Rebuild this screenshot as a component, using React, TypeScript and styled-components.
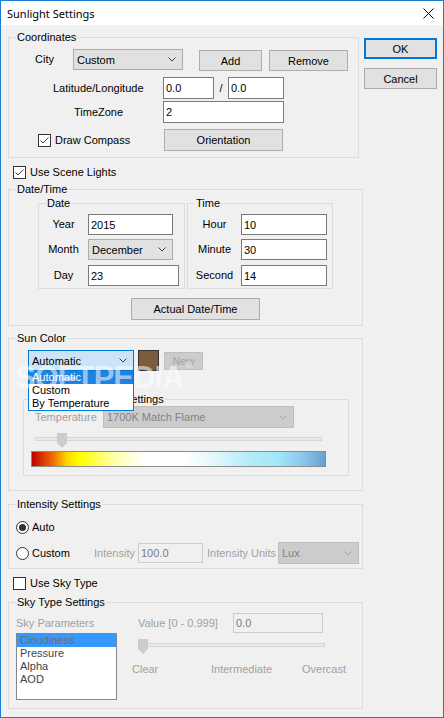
import styled, { createGlobalStyle } from "styled-components";

const GlobalStyle = createGlobalStyle`
  body {
    margin: 0;
    background: #ffffff;
    font-family: "Liberation Sans", Arial, sans-serif;
    font-size: 11px;
  }
`;

const Window = styled.div`
  position: relative;
  width: 444px;
  height: 718px;
  box-sizing: border-box;
  border: 1px solid #1a7dd4;
  display: flex;
  flex-direction: column;
  background: #f0f0f0;
  overflow: hidden;
  color: #000;
`;

const TitleBar = styled.div`
  flex: none;
  height: 24px;
  background: #ffffff;
  display: flex;
  align-items: center;
  justify-content: space-between;
  padding: 0 9px 0 6px;
`;

const Title = styled.span`
  font-family: "Noto Sans", "Liberation Sans", sans-serif;
  font-size: 11px;
  line-height: 16px;
  padding-top: 1px;
`;

const Body = styled.div`
  flex: 1;
  display: flex;
  padding-left: 7px;
`;

const LeftColumn = styled.div`
  width: 355px;
  flex: none;
  display: flex;
  flex-direction: column;
`;

const RightColumn = styled.div`
  margin-left: 1px;
  padding-top: 13px;
  display: flex;
  flex-direction: column;
  gap: 9px;
`;

const Group = styled.div<{ $w: number; $h: number; $mt?: number; $ml?: number }>`
  position: relative;
  box-sizing: border-box;
  flex: none;
  width: ${(p) => p.$w}px;
  height: ${(p) => p.$h}px;
  margin-top: ${(p) => p.$mt ?? 0}px;
  margin-left: ${(p) => p.$ml ?? 0}px;
  border: 1px solid #dcdcdc;
  display: flex;
  flex-direction: column;
`;

const Legend = styled.span<{ $left?: number }>`
  position: absolute;
  top: -8px;
  left: ${(p) => p.$left ?? 7}px;
  padding: 0 1px;
  background: #f0f0f0;
  line-height: 14px;
  white-space: nowrap;
`;

const Row = styled.div<{ $h: number; $mt?: number; $ml?: number; $top?: boolean }>`
  flex: none;
  display: flex;
  align-items: ${(p) => (p.$top ? "flex-start" : "center")};
  height: ${(p) => p.$h}px;
  margin-top: ${(p) => p.$mt ?? 0}px;
  margin-left: ${(p) => p.$ml ?? 0}px;
`;

const Label = styled.span<{ $w?: number; $ml?: number; $mt?: number; $dim?: boolean; $center?: boolean }>`
  flex: none;
  width: ${(p) => (p.$w ? `${p.$w}px` : "auto")};
  margin-left: ${(p) => p.$ml ?? 0}px;
  margin-top: ${(p) => p.$mt ?? 0}px;
  color: ${(p) => (p.$dim ? "#a0a0a0" : "#000")};
  text-align: ${(p) => (p.$center ? "center" : "left")};
  line-height: 13px;
  white-space: nowrap;
`;

const Btn = styled.button<{
  $w: number;
  $h: number;
  $ml?: number;
  $mt?: number;
  $primary?: boolean;
  $off?: boolean;
}>`
  flex: none;
  box-sizing: border-box;
  width: ${(p) => p.$w}px;
  height: ${(p) => p.$h}px;
  margin: ${(p) => p.$mt ?? 0}px 0 0 ${(p) => p.$ml ?? 0}px;
  padding: 0;
  font: 11px "Liberation Sans", Arial, sans-serif;
  color: ${(p) => (p.$off ? "#a3a3a3" : "#000")};
  background: ${(p) => (p.$off ? "#cccccc" : "#e1e1e1")};
  border: ${(p) =>
    p.$primary ? "2px solid #0078d7" : `1px solid ${p.$off ? "#bfbfbf" : "#adadad"}`};
  align-self: ${(p) => (p.$mt ? "flex-start" : "auto")};
`;

const Field = styled.input<{ $w: number; $h: number; $ml?: number; $off?: boolean }>`
  flex: none;
  box-sizing: border-box;
  width: ${(p) => p.$w}px;
  height: ${(p) => p.$h}px;
  margin: 0 0 0 ${(p) => p.$ml ?? 0}px;
  padding: 0 2px;
  font: 11px "Liberation Sans", Arial, sans-serif;
  color: ${(p) => (p.$off ? "#7a7a7a" : "#000")};
  background: ${(p) => (p.$off ? "#f0f0f0" : "#ffffff")};
  border: 1px solid ${(p) => (p.$off ? "#cccccc" : "#7a7a7a")};
  outline: none;
`;

type ComboState = "normal" | "focus" | "off";

const comboColors: Record<ComboState, { bg: string; border: string; text: string; arrow: string }> = {
  normal: { bg: "#e1e1e1", border: "#adadad", text: "#000", arrow: "#444" },
  focus: { bg: "#cce4f7", border: "#0078d7", text: "#000", arrow: "#444" },
  off: { bg: "#cccccc", border: "#bfbfbf", text: "#838383", arrow: "#a8a8a8" },
};

const ComboBox = styled.div<{ $w: number; $h: number; $ml?: number; $state: ComboState }>`
  position: relative;
  flex: none;
  box-sizing: border-box;
  display: flex;
  align-items: center;
  justify-content: space-between;
  width: ${(p) => p.$w}px;
  height: ${(p) => p.$h}px;
  margin-left: ${(p) => p.$ml ?? 0}px;
  padding: 0 6px 0 3px;
  background: ${(p) => comboColors[p.$state].bg};
  border: 1px solid ${(p) => comboColors[p.$state].border};
  color: ${(p) => comboColors[p.$state].text};
`;

const DropList = styled.div`
  position: absolute;
  z-index: 2;
  top: 19px;
  left: -1px;
  width: 106px;
  box-sizing: border-box;
  border: 1px solid #0078d7;
  background: #ffffff;
`;

const DropItem = styled.div<{ $active?: boolean }>`
  height: 13px;
  line-height: 13px;
  padding-left: 3px;
  background: ${(p) => (p.$active ? "#1e82e0" : "transparent")};
  color: ${(p) => (p.$active ? "#ffffff" : "#000")};
`;

const CheckBox = styled.span<{ $ml?: number; $round?: boolean }>`
  flex: none;
  box-sizing: border-box;
  width: 13px;
  height: 13px;
  margin-left: ${(p) => p.$ml ?? 0}px;
  border: 1px solid #333333;
  border-radius: ${(p) => (p.$round ? "50%" : "0")};
  background: #ffffff;
  display: flex;
  align-items: center;
  justify-content: center;
`;

const Dot = styled.span`
  width: 7px;
  height: 7px;
  border-radius: 50%;
  background: #333333;
`;

const Swatch = styled.div<{ $ml?: number }>`
  flex: none;
  box-sizing: border-box;
  width: 21px;
  height: 21px;
  margin-left: ${(p) => p.$ml ?? 0}px;
  background: #7b5d3b;
  border: 1px solid #333333;
`;

const Slider = styled.div<{ $w: number; $ml?: number; $mt?: number }>`
  position: relative;
  flex: none;
  width: ${(p) => p.$w}px;
  height: 15px;
  margin-left: ${(p) => p.$ml ?? 0}px;
  margin-top: ${(p) => p.$mt ?? 0}px;

  &::before {
    content: "";
    position: absolute;
    left: 0;
    right: 0;
    top: 4px;
    height: 4px;
    box-sizing: border-box;
    background: #e7eaea;
    border: 1px solid #d6d6d6;
  }
`;

const Thumb = styled.svg<{ $x: number }>`
  position: absolute;
  top: 0;
  left: ${(p) => p.$x}px;
`;

const GradientBar = styled.div`
  flex: none;
  box-sizing: border-box;
  width: 295px;
  height: 16px;
  margin: 3px 0 0 7px;
  border: 1px solid #8c8c8c;
  background: linear-gradient(
    to right,
    #c00000 0%,
    #ee6a00 7%,
    #ffd800 12%,
    #ffff00 16%,
    #ffffa8 28%,
    #ffffff 38%,
    #ffffff 52%,
    #e4f7fc 62%,
    #b4ecfa 74%,
    #a2e6f8 84%,
    #8cc8ec 92%,
    #6a9fd2 100%
  );
`;

const ListBox = styled.div`
  flex: none;
  box-sizing: border-box;
  width: 101px;
  height: 67px;
  margin-left: 7px;
  border: 1px solid #828790;
  background: #ffffff;
`;

const ListItem = styled.div<{ $active?: boolean }>`
  height: 13px;
  line-height: 13px;
  padding-left: 3px;
  background: ${(p) => (p.$active ? "#3399ff" : "transparent")};
  color: ${(p) => (p.$active ? "#7a6a5c" : "#444444")};
`;

const SkyControls = styled.div`
  display: flex;
  flex-direction: column;
  margin-left: 15px;
`;

const Watermark = styled.div`
  position: absolute;
  z-index: 5;
  left: 14px;
  top: 359px;
  font-family: "Liberation Sans", Arial, sans-serif;
  font-weight: bold;
  font-size: 31px;
  letter-spacing: -1px;
  color: rgba(255, 255, 255, 0.55);
  pointer-events: none;

  sup {
    font-size: 9px;
    vertical-align: top;
    margin-left: 2px;
  }
`;

const Chevron = ({ color }: { color: string }) => (
  <svg width="8" height="5" viewBox="0 0 8 5">
    <path d="M0.5 0.5 L4 4 L7.5 0.5" fill="none" stroke={color} strokeWidth="1" />
  </svg>
);

const Combo = ({
  w,
  h,
  ml,
  state = "normal",
  value,
  children,
}: {
  w: number;
  h: number;
  ml?: number;
  state?: ComboState;
  value: string;
  children?: React.ReactNode;
}) => (
  <ComboBox $w={w} $h={h} $ml={ml} $state={state}>
    <span>{value}</span>
    <Chevron color={comboColors[state].arrow} />
    {children}
  </ComboBox>
);

const Check = ({ ml, checked }: { ml?: number; checked?: boolean }) => (
  <CheckBox $ml={ml}>
    {checked && (
      <svg width="11" height="11" viewBox="0 0 11 11">
        <path d="M1.5 5.5 L4 8 L9.5 2.5" fill="none" stroke="#444" strokeWidth="1" />
      </svg>
    )}
  </CheckBox>
);

const Radio = ({ ml, checked }: { ml?: number; checked?: boolean }) => (
  <CheckBox $ml={ml} $round>
    {checked && <Dot />}
  </CheckBox>
);

const SliderThumb = ({ x }: { x: number }) => (
  <Thumb $x={x} width="10" height="15" viewBox="0 0 10 15">
    <path d="M0 0 H10 V10 L5 15 L0 10 Z" fill="#cccccc" />
  </Thumb>
);

const CloseIcon = () => (
  <svg width="11" height="11" viewBox="0 0 11 11">
    <path d="M0.5 0.5 L10.5 10.5 M10.5 0.5 L0.5 10.5" stroke="#000" strokeWidth="1" />
  </svg>
);

export default function App() {
  return (
    <>
      <GlobalStyle />
      <Window>
        <TitleBar>
          <Title>Sunlight Settings</Title>
          <CloseIcon />
        </TitleBar>
        <Body>
          <LeftColumn>
            <Group $w={351} $h={121} $mt={12}>
              <Legend>Coordinates</Legend>
              <Row $h={22} $mt={11} $top>
                <Label $w={38} $ml={26} $mt={4}>
                  City
                </Label>
                <Combo w={110} h={21} value="Custom" />
                <Btn $w={63} $h={21} $ml={16} $mt={1}>
                  Add
                </Btn>
                <Btn $w={79} $h={21} $ml={7} $mt={1}>
                  Remove
                </Btn>
              </Row>
              <Row $h={22} $mt={6}>
                <Label $w={110} $ml={44}>
                  Latitude/Longitude
                </Label>
                <Field $w={51} $h={22} readOnly defaultValue="0.0" />
                <Label $w={14} $center>
                  /
                </Label>
                <Field $w={56} $h={22} readOnly defaultValue="0.0" />
              </Row>
              <Row $h={22} $mt={2}>
                <Label $w={89} $ml={65}>
                  TimeZone
                </Label>
                <Field $w={121} $h={22} readOnly defaultValue="2" />
              </Row>
              <Row $h={22} $mt={6}>
                <Check ml={29} checked />
                <Label $w={109} $ml={4}>
                  Draw Compass
                </Label>
                <Btn $w={119} $h={22}>
                  Orientation
                </Btn>
              </Row>
            </Group>

            <Row $h={13} $mt={8}>
              <Check ml={5} checked />
              <Label $ml={4}>Use Scene Lights</Label>
            </Row>

            <Group $w={355} $h={137} $mt={10}>
              <Legend>Date/Time</Legend>
              <Row $h={86} $mt={13} $ml={29} $top>
                <Group $w={147} $h={86}>
                  <Legend>Date</Legend>
                  <Row $h={21} $mt={10}>
                    <Label $w={49} $center>
                      Year
                    </Label>
                    <Field $w={85} $h={21} readOnly defaultValue="2015" />
                  </Row>
                  <Row $h={21} $mt={4}>
                    <Label $w={49} $center>
                      Month
                    </Label>
                    <Combo w={85} h={21} value="December" />
                  </Row>
                  <Row $h={21} $mt={5}>
                    <Label $w={49} $center>
                      Day
                    </Label>
                    <Field $w={91} $h={21} readOnly defaultValue="23" />
                  </Row>
                </Group>
                <Group $w={146} $h={86} $ml={2}>
                  <Legend>Time</Legend>
                  <Row $h={21} $mt={10}>
                    <Label $w={53} $center>
                      Hour
                    </Label>
                    <Field $w={86} $h={21} readOnly defaultValue="10" />
                  </Row>
                  <Row $h={21} $mt={4}>
                    <Label $w={53} $center>
                      Minute
                    </Label>
                    <Field $w={86} $h={21} readOnly defaultValue="30" />
                  </Row>
                  <Row $h={21} $mt={5}>
                    <Label $w={53} $center>
                      Second
                    </Label>
                    <Field $w={86} $h={21} readOnly defaultValue="14" />
                  </Row>
                </Group>
              </Row>
              <Row $h={22} $mt={9}>
                <Btn $w={129} $h={22} $ml={122}>
                  Actual Date/Time
                </Btn>
              </Row>
            </Group>

            <Group $w={355} $h={153} $mt={12}>
              <Legend>Sun Color</Legend>
              <Row $h={21} $mt={11} $ml={19}>
                <Combo w={106} h={21} state="focus" value="Automatic">
                  <DropList>
                    <DropItem $active>Automatic</DropItem>
                    <DropItem>Custom</DropItem>
                    <DropItem>By Temperature</DropItem>
                  </DropList>
                </Combo>
                <Swatch $ml={4} />
                <Btn $w={39} $h={18} $ml={5} $off>
                  New
                </Btn>
              </Row>
              <Group $w={326} $h={77} $mt={28} $ml={14}>
                <Legend $left={5}>Color Temperature Settings</Legend>
                <Row $h={22} $mt={6}>
                  <Label $w={68} $ml={11} $dim>
                    Temperature
                  </Label>
                  <Combo w={191} h={22} state="off" value="1700K Match Flame" />
                </Row>
                <Slider $w={287} $ml={11} $mt={5}>
                  <SliderThumb x={22} />
                </Slider>
                <GradientBar />
              </Group>
            </Group>

            <Group $w={355} $h={65} $mt={13}>
              <Legend>Intensity Settings</Legend>
              <Row $h={13} $mt={16}>
                <Radio ml={7} checked />
                <Label $ml={3}>Auto</Label>
              </Row>
              <Row $h={22} $mt={8}>
                <Radio ml={7} />
                <Label $w={62} $ml={3}>
                  Custom
                </Label>
                <Label $w={44} $dim>
                  Intensity
                </Label>
                <Field $w={65} $h={20} $off readOnly defaultValue="100.0" />
                <Label $w={71} $ml={4} $dim>
                  Intensity Units
                </Label>
                <Combo w={81} h={22} state="off" value="Lux" />
              </Row>
            </Group>

            <Row $h={13} $mt={8}>
              <Check ml={5} />
              <Label $ml={4}>Use Sky Type</Label>
            </Row>

            <Group $w={355} $h={107} $mt={12}>
              <Legend>Sky Type Settings</Legend>
              <Row $h={20} $mt={10}>
                <Label $w={122} $ml={7} $dim>
                  Sky Parameters
                </Label>
                <Label $w={95} $dim>
                  Value [0 - 0.999]
                </Label>
                <Field $w={90} $h={20} $off readOnly defaultValue="0.0" />
              </Row>
              <Row $h={67} $top>
                <ListBox>
                  <ListItem $active>Cloudiness</ListItem>
                  <ListItem>Pressure</ListItem>
                  <ListItem>Alpha</ListItem>
                  <ListItem>AOD</ListItem>
                </ListBox>
                <SkyControls>
                  <Slider $w={187} $ml={6} $mt={6}>
                    <SliderThumb x={0} />
                  </Slider>
                  <Row $h={13} $mt={9}>
                    <Label $w={79} $dim>
                      Clear
                    </Label>
                    <Label $w={91} $dim>
                      Intermediate
                    </Label>
                    <Label $dim>Overcast</Label>
                  </Row>
                </SkyControls>
              </Row>
            </Group>
          </LeftColumn>

          <RightColumn>
            <Btn $w={73} $h={21} $primary>
              OK
            </Btn>
            <Btn $w={73} $h={21}>
              Cancel
            </Btn>
          </RightColumn>
        </Body>
        <Watermark>
          SOFTPEDIA<sup>®</sup>
        </Watermark>
      </Window>
    </>
  );
}
